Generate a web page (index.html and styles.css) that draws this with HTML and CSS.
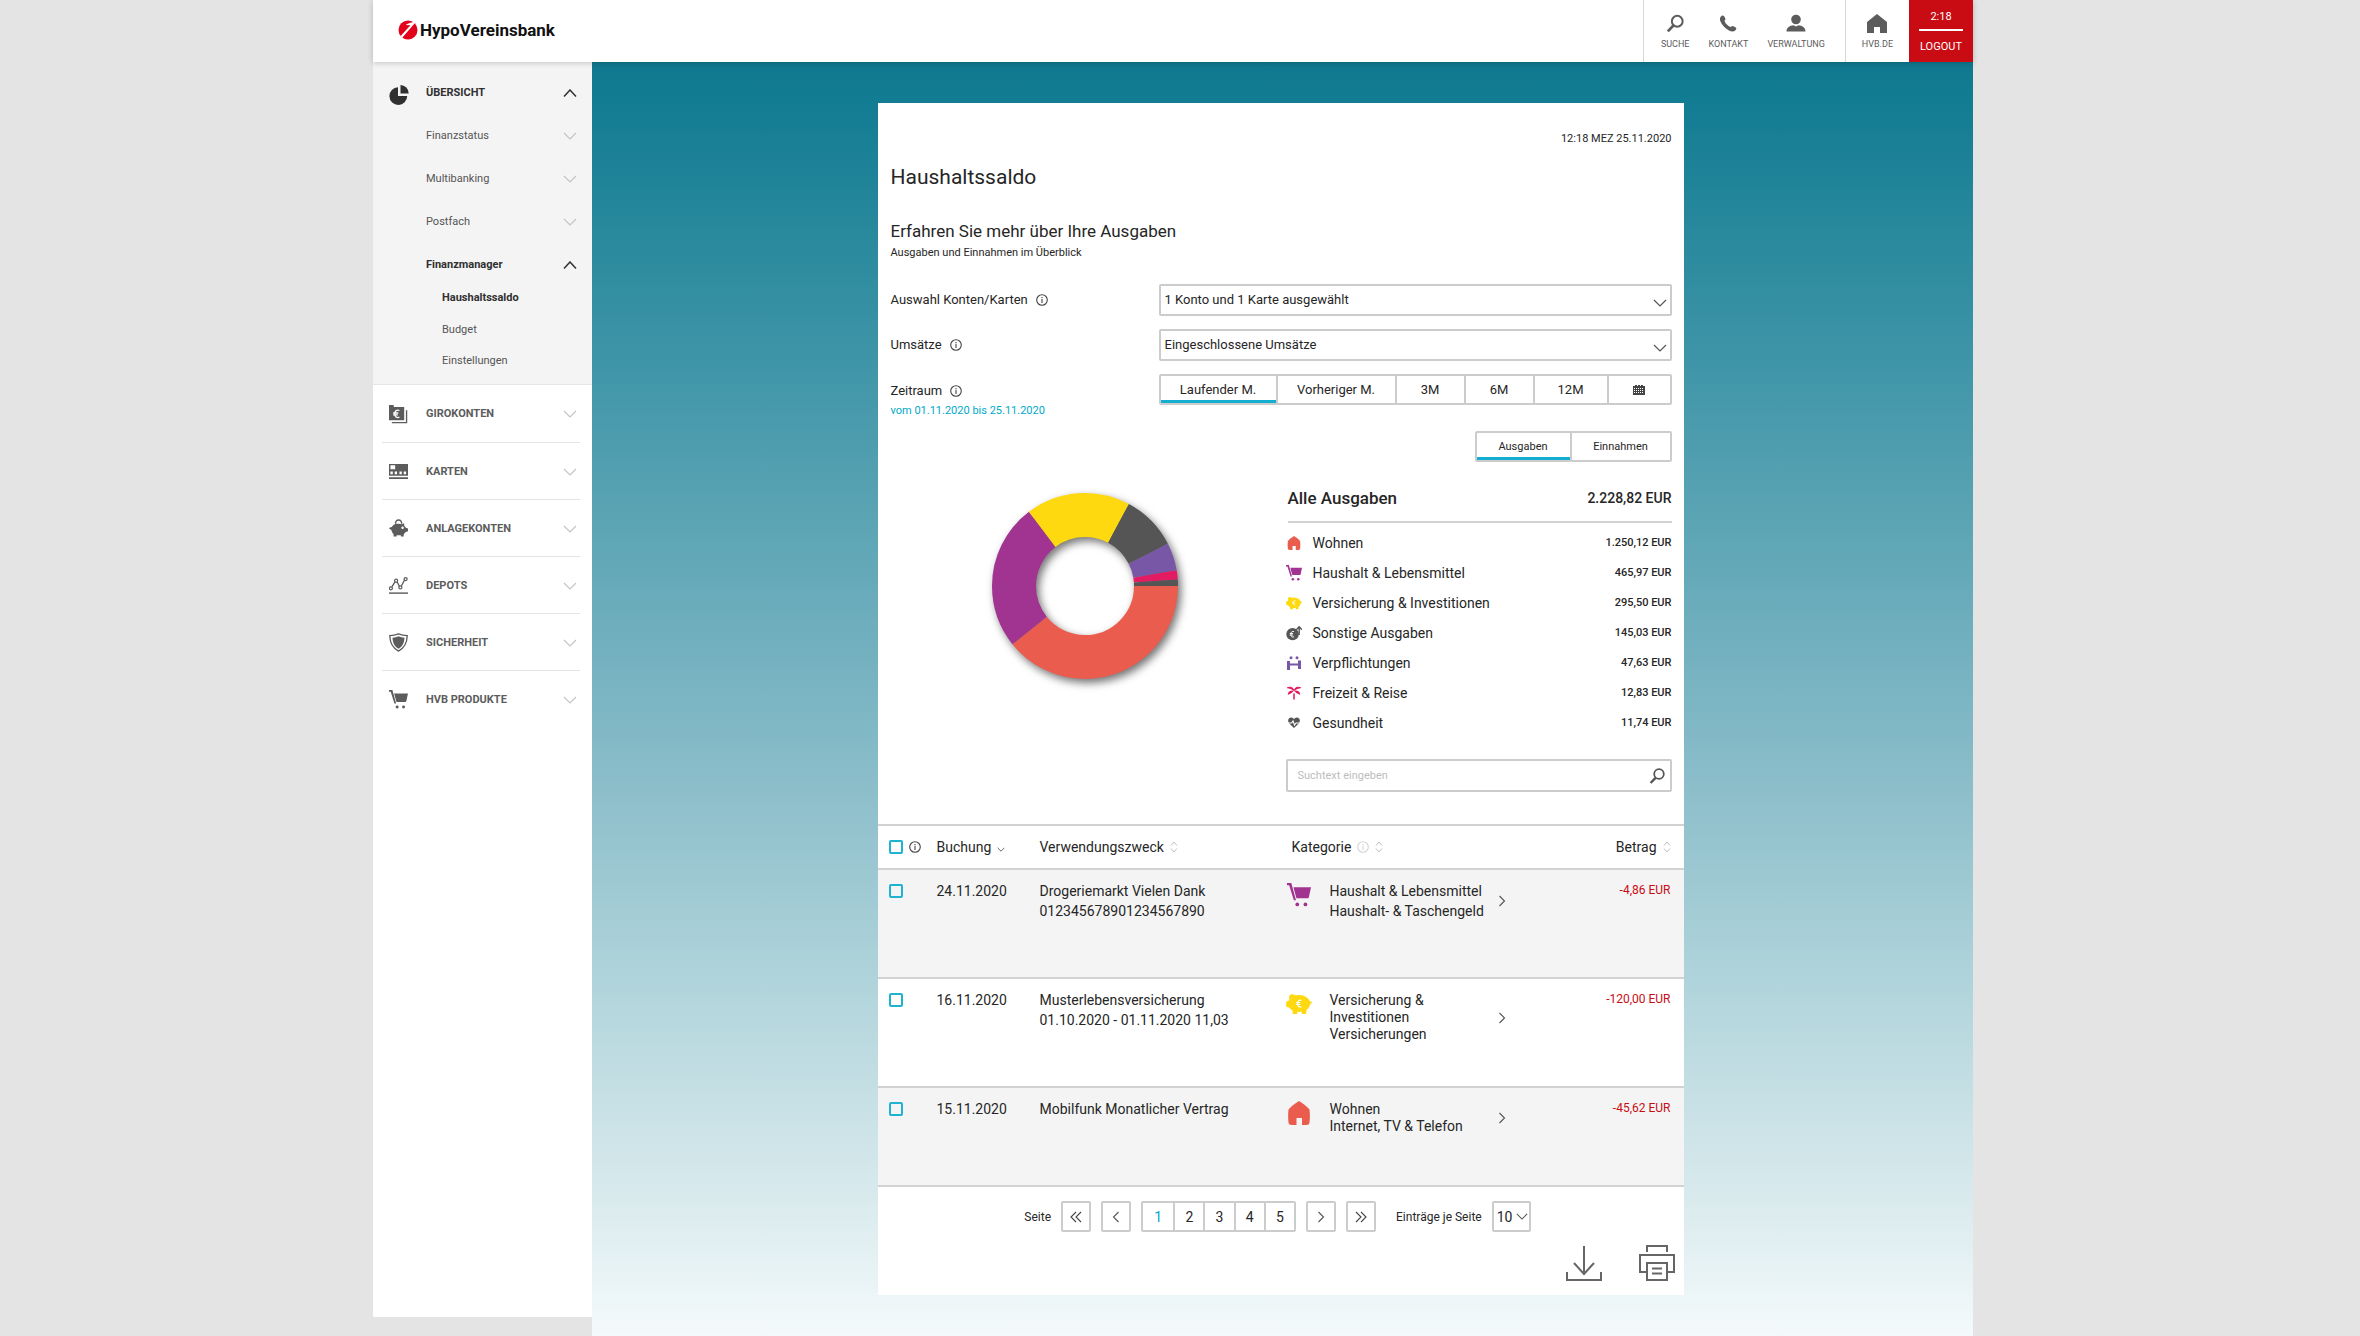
FILE: index.html
```html
<!DOCTYPE html>
<html lang="de">
<head>
<meta charset="utf-8">
<title>Haushaltssaldo – HypoVereinsbank</title>
<meta name="viewport" content="width=device-width, initial-scale=1">
<link rel="stylesheet" href="styles.css">
</head>
<body>
<svg class="sprite" aria-hidden="true">
  <symbol id="down" viewBox="0 0 14 8"><path d="M1 1l6 6 6-6" fill="none" stroke="currentColor" stroke-width="1.2"/></symbol>
  <symbol id="up" viewBox="0 0 14 8"><path d="M1 7.4L7 1l6 6.400" fill="none" stroke="currentColor" stroke-width="1.500"/></symbol>
  <symbol id="right" viewBox="0 0 8 12"><path d="M1.500 1l5 5-5 5" fill="none" stroke="currentColor" stroke-width="1.100"/></symbol>
  <symbol id="left" viewBox="0 0 8 12"><path d="M6.500 1l-5 5 5 5" fill="none" stroke="currentColor" stroke-width="1.100"/></symbol>
  <symbol id="first" viewBox="0 0 12 12"><path d="M6 1L1 6l5 5M11 1L6 6l5 5" fill="none" stroke="currentColor" stroke-width="1.100"/></symbol>
  <symbol id="last" viewBox="0 0 12 12"><path d="M1 1l5 5-5 5M6 1l5 5-5 5" fill="none" stroke="currentColor" stroke-width="1.100"/></symbol>
  <symbol id="sort" viewBox="0 0 8 12"><path d="M1 4.500L4 1l3 3.500M1 7.500L4 11l3-3.500" fill="none" stroke="currentColor"/></symbol>
  <symbol id="info" viewBox="0 0 12 12"><circle cx="6" cy="6" r="5.300" fill="none" stroke="currentColor" stroke-width="1.100"/><path d="M6 5v4M6 3v1.200" stroke="currentColor" stroke-width="1.100"/></symbol>
  <symbol id="search" viewBox="0 0 20 20"><circle cx="12.500" cy="7.500" r="6" fill="none" stroke="currentColor" stroke-width="2.200"/><path d="M8.500 12L2 18.800" stroke="currentColor" stroke-width="3"/></symbol>
  <symbol id="phone" viewBox="0 0 18 18"><path d="M1.500 2.500C2.500 1 4.200.500 5 1.500l1.400 2.800c.4.900-.9 1.700-.9 2.200 1 2.600 3.300 5 6 6 .6.200 1.300-1.300 2.300-.9l3 1.500c1 .6.500 2.200-.8 3.200-1.500 1.200-4 .9-6.500-.5C5.500 13.500 2.500 9.500 1.300 6.500c-.5-1.500-.5-2.800.2-4z" fill="currentColor"/></symbol>
  <symbol id="user" viewBox="0 0 20 18"><circle cx="10" cy="5" r="4.800" fill="currentColor"/><path d="M.5 17c0-4 3.500-6 7-6.200L10 12l2.500-1.200c3.500.2 7 2.200 7 6.200z" fill="currentColor"/></symbol>
  <symbol id="home" viewBox="0 0 20 19"><path d="M10 0l10 8v11h-7v-6H7v6H0V8z" fill="currentColor"/></symbol>
  <symbol id="pie" viewBox="0 0 20 20"><path d="M9 2.200V11h9.200A8.900 8.900 0 1 1 9 2.200z" fill="currentColor"/><path d="M11.500 0A8.400 8.400 0 0 1 19.700 8.500h-8.200z" fill="currentColor"/></symbol>
  <symbol id="giro" viewBox="0 0 20 20"><path d="M0 0h5v2h11v14H0z" fill="currentColor"/><path d="M18.500 5.500v13H3" fill="none" stroke="currentColor" stroke-width="1.400"/><path d="M11 5.800C8 4.500 6.200 6.300 6.200 9.300s1.800 4.800 4.800 3.500M4.300 8.400h5.500M4.300 10.400h5" fill="none" stroke="#fff" stroke-width="1.400"/></symbol>
  <symbol id="card" viewBox="0 0 20 18"><path d="M0 1h20v12.500H0zM0 15h20v2H0z" fill="currentColor"/><path d="M1.500 2.500h5v4h-5zM1.500 9h2.500v3H1.500zM6 9h2.500v3H6zM11 9h2.500v3H11zM15.500 9H18v3h-2.500z" fill="#fff"/></symbol>
  <symbol id="pig" viewBox="0 0 20 19"><path d="M7 4.500a3.200 3.200 0 1 1 6.200 0" fill="none" stroke="currentColor" stroke-width="1.500"/><path d="M3 8c1.500-3 4-3.500 7-3.500 1.500 0 2.500.2 3.500.6L16 4v2.600c.8.700 1.300 1.400 1.700 2.200L20 9.500v3l-2.500.8c-.6 1-1.200 1.600-2 2.100V18h-3v-1.500H8V18H4.800v-2.700C3.500 14 2.700 12.500 2.500 11L0 9.500l.8-1z" fill="currentColor"/><circle cx="14.300" cy="8.800" r="1.300" fill="#fff"/></symbol>
  <symbol id="depot" viewBox="0 0 20 18"><path d="M3 10.500L6.500 5M8.500 5L11 10M13 9.500l3.500-6.500" fill="none" stroke="currentColor" stroke-width="1.400"/><g fill="none" stroke="currentColor" stroke-width="1.300"><circle cx="2" cy="12" r="1.600"/><circle cx="7.500" cy="4" r="1.600"/><circle cx="12" cy="11" r="1.600"/><circle cx="17.500" cy="2.200" r="1.600"/></g><path d="M0 17h20" stroke="currentColor" stroke-width="1.500"/></symbol>
  <symbol id="shield" viewBox="0 0 20 20"><path d="M10 1c3 1.200 6 1.700 9.200 1.700C19 10 17 15.500 10 19 3 15.500 1 10 .8 2.700 4 2.700 7 2.200 10 1z" fill="none" stroke="currentColor" stroke-width="1.400"/><path d="M10 3.500c2 .8 4 1.200 6.300 1.400C16 10 14.500 14 10 16.500 5.500 14 4 10 3.700 4.900 6 4.700 8 4.300 10 3.500z" fill="currentColor"/></symbol>
  <symbol id="cart" viewBox="0 0 28 28"><path d="M0 0h5l5.500 20H8L2.500 2.500H0zM7.500 5H28l-2.500 11.500c-.2.800-.6 1.200-1.500 1.200H11z" fill="currentColor"/><circle cx="12" cy="25" r="2.200" fill="currentColor"/><circle cx="21.500" cy="25" r="2.200" fill="currentColor"/></symbol>
  <symbol id="wohnen" viewBox="0 0 22 24"><path d="M11 0c4 2.500 8 5.500 10.500 8.500.5 5 .5 9 0 13-.2 1.700-1 2.500-3.500 2.500h-4v-7H8.500v7H4c-2.500 0-3.300-.8-3.500-2.500-.5-4-.5-8 0-13C3 5.500 7 2.500 11 0z" fill="currentColor"/></symbol>
  <symbol id="ypig" viewBox="0 0 27 21"><g fill="currentColor"><ellipse cx="13.500" cy="10" rx="11.500" ry="8.800"/><path d="M3.500 5.500C2.500 2 4.500 0 7 .500L11 2zM3 7L.5 8C0 9.500 0 12 .5 13.500L4 14.500zM23 7c1.500 1 2.500 1 4 .8-.3 2-1.500 3-3 3.400zM6.500 15l.5 6h4.500l.5-3zM16 17.500l.7 3.500h4l1-6z"/></g><path d="M16 6.800c-2.200-1-4 .4-4 3.200s1.800 4.200 4 3.200M10.500 9.100h4.200M10.500 11h4.200" fill="none" stroke="#fff" stroke-width="1.200"/></symbol>
  <symbol id="bag" viewBox="0 0 17 16"><circle cx="7" cy="9.200" r="6.600" fill="currentColor"/><path d="M14 10V2M11 4.500L14 1.300l3 3.200" fill="none" stroke="currentColor" stroke-width="1.500"/><path d="M8.500 6.500C6.500 5.700 5.200 7 5.200 9.300s1.300 3.600 3.300 2.800M4 8.500h3.500M4 10.200h3.500" fill="none" stroke="#fff"/></symbol>
  <symbol id="deal" viewBox="0 0 14 14"><path d="M0 5h3v2.500h8V4.500h3V13h-3V9.500H3V14H0z" fill="currentColor"/><circle cx="4" cy="1.700" r="1.500" fill="currentColor"/><circle cx="10" cy="1.700" r="1.500" fill="currentColor"/></symbol>
  <symbol id="palm" viewBox="0 0 14 13"><path d="M6.500 3.300C5 .5 2.500.2.500 1.300c2 .2 4 1 6 2zM7.500 3.300c1.500-2.800 4-3.100 6-2-2 .2-4 1-6 2zM5.800 4.600C3.500 4.500 2 5.500 1.500 7.500c1.800-.6 3.200-1.500 4.300-2.900zM8.200 4.600c2.300-.1 3.800.9 4.300 2.900-1.800-.6-3.200-1.500-4.300-2.900z" fill="currentColor" stroke="currentColor" stroke-width="1.100"/><path d="M7 7v6" stroke="currentColor" stroke-width="1.500"/></symbol>
  <symbol id="heart" viewBox="0 0 12 11"><path d="M6 10.500L1 5.800C-.8 3 .500 0 3 0c1.500 0 2.500.7 3 1.800C6.500.7 7.500 0 9 0c2.500 0 3.800 3 2 5.800z" fill="currentColor"/><path d="M0 5.500h3.500L5 3.500l1.500 4L8 5.500h4" fill="none" stroke="#fff" stroke-width="1.100"/></symbol>
  <symbol id="calendar" viewBox="0 0 12 12"><path d="M0 2h12v9H0z" fill="currentColor"/><path d="M2 1h2v1H2zM5 1h2v1H5zM8 1h2v1H8z" fill="currentColor"/><path d="M1 4.500h10M1 6.500h10M1 8.500h10" stroke="#fff" stroke-dasharray="1 1"/></symbol>
  <symbol id="download" viewBox="0 0 36 36"><path d="M18 1v28M8 18l10 11 10-11M1 27v8h34v-8" fill="none" stroke="currentColor" stroke-width="2"/></symbol>
  <symbol id="print" viewBox="0 0 36 36"><path d="M8 7V1h20v6M8 27H1V10h34v17h-7M8 18h20v17H8zM13 23.500h10M13 28.500h10" fill="none" stroke="currentColor" stroke-width="2"/></symbol>
</svg>

<div class="shell">
  <header class="topbar">
    <a class="logo" href="#">
      <svg class="logo-mark" viewBox="0 0 20 20" aria-hidden="true"><circle cx="10" cy="10" r="9.500" fill="#e2001a"/><path d="M2.600 16L12.500 5.200 7.800 5c1.500-1.300 4.500-2.600 8-3L17 3 4.200 17.800z" fill="#fff"/></svg>
      <span>HypoVereinsbank</span>
    </a>
    <nav class="tools" aria-label="Service">
      <div class="tool-group">
        <a class="tool" href="#"><svg class="i17"><use href="#search"/></svg>SUCHE</a>
        <a class="tool" href="#"><svg class="i17"><use href="#phone"/></svg>KONTAKT</a>
        <a class="tool" href="#"><svg class="i18"><use href="#user"/></svg>VERWALTUNG</a>
      </div>
      <div class="tool-group tool-home">
        <a class="tool" href="#"><svg class="i19"><use href="#home"/></svg>HVB.DE</a>
      </div>
      <button class="logout" type="button"><span class="timer">2:18</span><span>LOGOUT</span></button>
    </nav>
  </header>

  <nav class="sidebar" aria-label="Hauptnavigation">
    <div class="open-section">
      <a class="nav-row nav-main" href="#"><svg class="nav-icon"><use href="#pie"/></svg><span>ÜBERSICHT</span><svg class="chev"><use href="#up"/></svg></a>
      <a class="nav-row nav-sub" href="#"><span>Finanzstatus</span><svg class="chev"><use href="#down"/></svg></a>
      <a class="nav-row nav-sub" href="#"><span>Multibanking</span><svg class="chev"><use href="#down"/></svg></a>
      <a class="nav-row nav-sub" href="#"><span>Postfach</span><svg class="chev"><use href="#down"/></svg></a>
      <a class="nav-row nav-sub active" href="#"><span>Finanzmanager</span><svg class="chev"><use href="#up"/></svg></a>
      <a class="nav-leaf active" href="#">Haushaltssaldo</a>
      <a class="nav-leaf" href="#">Budget</a>
      <a class="nav-leaf" href="#">Einstellungen</a>
    </div>
    <div class="sections">
      <a class="nav-row section" href="#"><svg class="nav-icon"><use href="#giro"/></svg><span>GIROKONTEN</span><svg class="chev"><use href="#down"/></svg></a>
      <a class="nav-row section" href="#"><svg class="nav-icon"><use href="#card"/></svg><span>KARTEN</span><svg class="chev"><use href="#down"/></svg></a>
      <a class="nav-row section" href="#"><svg class="nav-icon"><use href="#pig"/></svg><span>ANLAGEKONTEN</span><svg class="chev"><use href="#down"/></svg></a>
      <a class="nav-row section" href="#"><svg class="nav-icon"><use href="#depot"/></svg><span>DEPOTS</span><svg class="chev"><use href="#down"/></svg></a>
      <a class="nav-row section" href="#"><svg class="nav-icon"><use href="#shield"/></svg><span>SICHERHEIT</span><svg class="chev"><use href="#down"/></svg></a>
      <a class="nav-row section" href="#"><svg class="nav-icon"><use href="#cart"/></svg><span>HVB PRODUKTE</span><svg class="chev"><use href="#down"/></svg></a>
    </div>
  </nav>

  <main class="stage">
    <article class="card">
      <div class="intro">
        <p class="stamp">12:18 MEZ 25.11.2020</p>
        <h1>Haushaltssaldo</h1>
        <h2>Erfahren Sie mehr über Ihre Ausgaben</h2>
        <p class="lead">Ausgaben und Einnahmen im Überblick</p>
      </div>

      <form class="filters">
        <div class="field">
          <label for="konten">Auswahl Konten/Karten <svg class="i12"><use href="#info"/></svg></label>
          <div class="select"><select id="konten"><option>1 Konto und 1 Karte ausgewählt</option></select><svg class="chev"><use href="#down"/></svg></div>
        </div>
        <div class="field">
          <label for="umsaetze">Umsätze <svg class="i12"><use href="#info"/></svg></label>
          <div class="select"><select id="umsaetze"><option>Eingeschlossene Umsätze</option></select><svg class="chev"><use href="#down"/></svg></div>
        </div>
        <div class="field">
          <div class="period"><span class="period-name">Zeitraum <svg class="i12"><use href="#info"/></svg></span><span class="range">vom 01.11.2020 bis 25.11.2020</span></div>
          <div class="segments ranges">
            <button type="button" class="on">Laufender M.</button>
            <button type="button">Vorheriger M.</button>
            <button type="button">3M</button>
            <button type="button">6M</button>
            <button type="button">12M</button>
            <button type="button" aria-label="Kalender"><svg class="i12"><use href="#calendar"/></svg></button>
          </div>
        </div>
      </form>

      <div class="segments toggle">
        <button type="button" class="on">Ausgaben</button>
        <button type="button">Einnahmen</button>
      </div>

      <section class="overview">
        <svg class="donut" viewBox="0 0 210 210" role="img" aria-label="Verteilung der Ausgaben">
          <g fill="none" stroke-width="44" transform="translate(105 105)">
            <circle r="71" pathLength="360" stroke="#ea5c4d" stroke-dasharray="141.300 360"/>
            <circle r="71" pathLength="360" stroke="#a13391" stroke-dasharray="91.600 360" stroke-dashoffset="-141.300"/>
            <circle r="71" pathLength="360" stroke="#fed90f" stroke-dasharray="65.300 360" stroke-dashoffset="-232.900"/>
            <circle r="71" pathLength="360" stroke="#555" stroke-dasharray="34.800 360" stroke-dashoffset="-298.200"/>
            <circle r="71" pathLength="360" stroke="#7957a7" stroke-dasharray="17.300 360" stroke-dashoffset="-333"/>
            <circle r="71" pathLength="360" stroke="#e31b63" stroke-dasharray="5.600 360" stroke-dashoffset="-350.300"/>
            <circle r="71" pathLength="360" stroke="#555" stroke-dasharray="4.100 360" stroke-dashoffset="-355.900"/>
          </g>
        </svg>
        <div class="legend">
          <div class="legend-head"><h3>Alle Ausgaben</h3><strong>2.228,82 EUR</strong></div>
          <ul>
            <li><svg class="i14 c-red"><use href="#wohnen"/></svg><span>Wohnen</span><b>1.250,12 EUR</b></li>
            <li><svg class="i16 c-purple"><use href="#cart"/></svg><span>Haushalt &amp; Lebensmittel</span><b>465,97 EUR</b></li>
            <li><svg class="i16 c-yellow"><use href="#ypig"/></svg><span>Versicherung &amp; Investitionen</span><b>295,50 EUR</b></li>
            <li><svg class="i16 c-grey"><use href="#bag"/></svg><span>Sonstige Ausgaben</span><b>145,03 EUR</b></li>
            <li><svg class="i14 c-violet"><use href="#deal"/></svg><span>Verpflichtungen</span><b>47,63 EUR</b></li>
            <li><svg class="i14 c-pink"><use href="#palm"/></svg><span>Freizeit &amp; Reise</span><b>12,83 EUR</b></li>
            <li><svg class="i12 c-grey"><use href="#heart"/></svg><span>Gesundheit</span><b>11,74 EUR</b></li>
          </ul>
          <form class="search"><input type="search" aria-label="Suchtext" placeholder="Suchtext eingeben"><button type="button" aria-label="Suchen"><svg class="i16"><use href="#search"/></svg></button></form>
        </div>
      </section>

      <table class="bookings">
        <colgroup><col class="w-check"><col class="w-date"><col class="w-text"><col class="w-icon"><col class="w-cat"><col class="w-amount"></colgroup>
        <thead>
          <tr>
            <th><span class="cell"><input type="checkbox" aria-label="Alle auswählen"><svg class="i12"><use href="#info"/></svg></span></th>
            <th><span class="cell">Buchung <svg class="tiny"><use href="#down"/></svg></span></th>
            <th><span class="cell">Verwendungszweck <svg class="sort"><use href="#sort"/></svg></span></th>
            <th colspan="2" class="th-cat"><span class="cell">Kategorie <svg class="i12 faint"><use href="#info"/></svg><svg class="sort"><use href="#sort"/></svg></span></th>
            <th class="amount"><span class="cell end">Betrag <svg class="sort"><use href="#sort"/></svg></span></th>
          </tr>
        </thead>
        <tbody>
          <tr>
            <td><input type="checkbox" aria-label="Buchung 24.11.2020 auswählen"></td>
            <td>24.11.2020</td>
            <td>Drogeriemarkt Vielen Dank<br>012345678901234567890</td>
            <td><svg class="cat-icon c-purple"><use href="#cart"/></svg></td>
            <td><a class="category loose" href="#"><span>Haushalt &amp; Lebensmittel<br>Haushalt- &amp; Taschengeld</span><svg class="go"><use href="#right"/></svg></a></td>
            <td class="amount red">-4,86 EUR</td>
          </tr>
          <tr>
            <td><input type="checkbox" aria-label="Buchung 16.11.2020 auswählen"></td>
            <td>16.11.2020</td>
            <td>Musterlebensversicherung<br>01.10.2020 - 01.11.2020 11,03</td>
            <td><svg class="cat-icon c-yellow"><use href="#ypig"/></svg></td>
            <td><a class="category" href="#"><span>Versicherung &amp;<br>Investitionen<br>Versicherungen</span><svg class="go"><use href="#right"/></svg></a></td>
            <td class="amount red">-120,00 EUR</td>
          </tr>
          <tr class="last">
            <td><input type="checkbox" aria-label="Buchung 15.11.2020 auswählen"></td>
            <td>15.11.2020</td>
            <td>Mobilfunk Monatlicher Vertrag</td>
            <td><svg class="cat-icon c-red"><use href="#wohnen"/></svg></td>
            <td><a class="category" href="#"><span>Wohnen<br>Internet, TV &amp; Telefon</span><svg class="go"><use href="#right"/></svg></a></td>
            <td class="amount red">-45,62 EUR</td>
          </tr>
        </tbody>
      </table>

      <div class="pager">
        <span class="pager-name">Seite</span>
        <button type="button" class="page" aria-label="Erste Seite"><svg class="i12"><use href="#first"/></svg></button>
        <button type="button" class="page" aria-label="Vorherige Seite"><svg class="step"><use href="#left"/></svg></button>
        <div class="segments pages">
          <button type="button" class="current">1</button><button type="button">2</button><button type="button">3</button><button type="button">4</button><button type="button">5</button>
        </div>
        <button type="button" class="page" aria-label="Nächste Seite"><svg class="step"><use href="#right"/></svg></button>
        <button type="button" class="page" aria-label="Letzte Seite"><svg class="i12"><use href="#last"/></svg></button>
        <label class="per-page" for="per-page">Einträge je Seite</label>
        <div class="select small"><select id="per-page"><option>10</option></select><svg class="chev"><use href="#down"/></svg></div>
      </div>
      <div class="actions">
        <button type="button" aria-label="Herunterladen"><svg><use href="#download"/></svg></button>
        <button type="button" aria-label="Drucken"><svg><use href="#print"/></svg></button>
      </div>
    </article>
  </main>
</div>
</body>
</html>
```
FILE: styles.css
```css
* { box-sizing: border-box; }

body {
  margin: 0;
  min-height: 100vh;
  display: grid;
  grid-template-columns: minmax(0, 373fr) minmax(0, 1600px) minmax(0, 387fr);
  background: #e4e4e4;
  color: #262626;
  font: 13px/20px Roboto, "Noto Sans", sans-serif;
}

svg { display: block; flex: none; }
a { color: inherit; text-decoration: none; }
h1, h2, h3, p, ul { margin: 0; padding: 0; font-weight: 400; }
ul { list-style: none; }
button, input, select { font: inherit; color: inherit; margin: 0; }
button { padding: 0; border: 0; background: none; cursor: pointer; }

.sprite { position: absolute; width: 0; height: 0; }
.i12 { width: 12px; height: 12px; color: #444; }
.i14 { width: 14px; height: 14px; }
.i16 { width: 16px; height: 16px; }
.i17 { width: 18px; height: 18px; }
.i18 { width: 20px; height: 18px; }
.i19 { width: 20px; height: 19px; }
.c-red { color: #ea5c4d; }
.c-purple { color: #a13391; }
.c-yellow { color: #fed90f; }
.c-grey { color: #555; }
.c-violet { color: #7957a7; }
.c-pink { color: #e3175f; }

.shell {
  grid-column: 2;
  display: grid;
  grid-template-columns: 219px minmax(0, 1fr);
  grid-template-rows: 62px 1fr;
}

/* Top bar */
.topbar {
  grid-column: 1 / -1;
  display: flex;
  justify-content: space-between;
  background: #fff;
  box-shadow: 0 1px 6px rgba(0, 0, 0, .2);
  z-index: 1;
}
.logo {
  display: flex;
  align-items: center;
  gap: 2px;
  padding-left: 25px;
  height: 60px;
  font-size: 17px;
  font-weight: 700;
  color: #111;
}
.logo-mark { width: 20px; height: 20px; }
.tools { display: flex; }
.tool-group {
  display: flex;
  gap: 19px;
  padding: 14px 20px 0 17px;
  border-left: 1px solid #d8d8d8;
}
.tool-home { padding: 14px 16px 0; }
.tool {
  display: flex;
  flex-direction: column;
  align-items: center;
  gap: 3px;
  font-size: 9px;
  line-height: 16px;
  color: #5c5c5c;
}
.tool svg { height: 19px; }
.logout {
  display: flex;
  flex-direction: column;
  align-items: center;
  width: 64px;
  padding: 7px 10px;
  background: #c90c14;
  color: #fff;
  font-size: 11px;
  gap: 6px;
}
.timer { align-self: stretch; padding-bottom: 2px; border-bottom: 2px solid #fff; }

/* Sidebar */
.sidebar { background: #fff; margin-bottom: 19px; font-size: 11px; color: #555; }
.open-section { background: #f4f4f4; padding: 10px 0 8px; border-bottom: 1px solid #e6e6e6; }
.nav-row {
  display: grid;
  grid-template-columns: 20px 1fr 14px;
  column-gap: 17px;
  align-items: center;
  padding: 0 15px 0 16px;
}
.nav-icon { width: 20px; height: 20px; }
.section .nav-icon { width: 19px; height: 19px; }
.nav-row .chev { width: 14px; height: 8px; }
.nav-main { min-height: 42px; font-weight: 700; color: #303030; }
.nav-main .nav-icon { margin-top: 4px; }
.nav-sub { min-height: 43px; }
.nav-sub span { grid-column: 2; }
.nav-sub .chev, .section .chev { color: #c4c4c4; }
.active, .nav-sub.active .chev { color: #303030; font-weight: 700; }
.nav-leaf { display: block; padding: 0 0 0 69px; line-height: 31px; }
.nav-leaf.active { line-height: 24px; padding-bottom: 4px; }
.sections { padding: 0 12px 0 9px; }
.section { min-height: 57px; padding: 1px 3px 0 7px; font-weight: 700; color: #5c5c5c; }
.section + .section { border-top: 1px solid #e4e4e4; }

/* Content stage */
.stage {
  padding: 41px 24px 40px 20px;
  background: linear-gradient(#10798f, #127c92 3%, #4498aa 26%, #85bac7 54%, #b2d5dc 73%, #dbebee 90%, #f4fafb);
}
.card { max-width: 806px; margin: 0 auto; background: #fff; }
.intro, .filters { padding: 0 12px 0 13px; }
.intro { padding-top: 26px; }
.stamp { text-align: right; font-size: 11px; }
h1 { margin-top: 14px; font-size: 21px; line-height: 28px; }
h2 { margin-top: 28px; font-size: 17px; line-height: 24px; }
.lead { font-size: 11px; }

.filters { display: grid; gap: 13px; padding-top: 21px; }
.field { display: grid; grid-template-columns: 268px minmax(0, 1fr); align-items: center; }
.field label, .period-name { display: flex; align-items: center; gap: 8px; }
.select { display: grid; align-items: center; }
.select > * { grid-area: 1 / 1; }
.select select {
  width: 100%;
  height: 32px;
  padding: 0 6px 1px 4px;
  border: 2px solid #ccc;
  border-radius: 2px;
  background: #fff;
  appearance: none;
}
.select .chev { width: 14px; height: 8px; justify-self: end; margin: 6px 5px 0 0; color: #555; pointer-events: none; }
.period { display: grid; align-self: start; padding-top: 7px; height: 31px; }
.range { font-size: 11px; color: #00a9cb; }

.segments { display: grid; height: 31px; border: 2px solid #ccc; border-radius: 2px; }
.segments button { display: flex; align-items: center; justify-content: center; border-left: 2px solid #ccc; }
.segments button:first-child { border-left: 0; }
.segments .on { border-bottom: 3px solid #14aed0; padding-top: 3px; }
.ranges { grid-template-columns: 115fr 119fr 69fr 69fr 74fr 63fr; }
.toggle { grid-template-columns: 93fr 100fr; width: 197px; margin: 26px 12px 0 auto; font-size: 11px; }

/* Chart and legend */
.overview { display: grid; grid-template-columns: minmax(0, 1fr) 386px; padding: 19px 12px 32px; }
.donut {
  width: 210px;
  height: 210px;
  justify-self: center;
  margin: 0 6px 0 0;
  filter: drop-shadow(3px 4px 4px rgba(0, 0, 0, .55));
}
.legend-head {
  display: flex;
  justify-content: space-between;
  align-items: center;
  height: 42px;
  margin-left: 2px;
  padding-bottom: 6px;
  border-bottom: 2px solid #d2d2d2;
}
h3 { font-size: 17px; font-weight: 500; }
.legend-head strong { font-size: 14px; font-weight: 500; }
.legend ul { padding-top: 5px; font-size: 14px; }
.legend li { display: grid; grid-template-columns: 16px 1fr auto; column-gap: 11px; align-items: center; height: 30px; }
.legend li svg { justify-self: center; }
.legend li b { font-size: 11px; font-weight: 500; }
.search {
  display: flex;
  align-items: center;
  height: 33px;
  margin-top: 21px;
  border: 2px solid #ccc;
  border-radius: 2px;
}
.search input { flex: 1; min-width: 0; border: 0; padding: 0 10px; font-size: 11px; background: none; }
.search input::placeholder { color: #bdbdbd; }
.search button { padding-right: 5px; color: #555; }

/* Bookings */
.bookings { width: 100%; table-layout: fixed; border-collapse: collapse; border-top: 2px solid #d2d2d2; font-size: 14px; }
.w-check { width: 59px; }
.w-date { width: 103px; }
.w-text { width: 246px; }
.w-icon { width: 44px; }
.w-cat { width: 220px; }
th, td { padding: 0; text-align: left; vertical-align: top; font-weight: 400; }
thead tr { height: 44px; }
th { vertical-align: middle; }
.cell { display: flex; align-items: center; gap: 6px; }
.end { justify-content: flex-end; }
.th-cat { padding-left: 6px; }
tbody tr { height: 109px; border-top: 2px solid #d2d2d2; }
tbody tr.last { height: 99px; border-bottom: 2px solid #d2d2d2; }
tbody tr:nth-child(odd) { background: #f4f4f4; }
td { padding-top: 11px; }
th:first-child, td:first-child { padding-left: 11px; }
input[type="checkbox"] {
  display: block;
  appearance: none;
  width: 14px;
  height: 14px;
  border: 2px solid #1fb2d1;
  border-radius: 2px;
}
td input[type="checkbox"] { margin-top: 3px; }
.tiny { width: 8px; height: 5px; margin-top: 5px; }
.sort { width: 8px; height: 12px; color: #c0c0c0; }
.faint { color: #d4d4d4; }
.cat-icon { width: 26px; height: 24px; margin-top: 2px; }
.category { display: grid; grid-template-columns: 168px 8px; align-items: center; line-height: 17px; padding-top: 2px; }
.category.loose { line-height: 20px; padding-top: 0; }
.go { width: 8px; height: 12px; color: #555; }
th.amount, td.amount { padding-right: 13px; text-align: right; }
td.amount { padding-top: 10px; font-size: 12px; }
.red { color: #c90c14; }

/* Pager */
.pager { display: flex; align-items: center; justify-content: center; gap: 10px; padding: 14px 6px 0 0; font-size: 12px; }
.pager .page { display: grid; place-items: center; width: 30px; height: 31px; border: 2px solid #ccc; border-radius: 2px; color: #555; }
.step { width: 8px; height: 12px; }
.pages { grid-template-columns: repeat(5, 1fr); width: 155px; font-size: 14px; }
.pages .current { color: #00a9cb; }
.per-page { margin-left: 10px; }
.small { width: 39px; font-size: 14px; }
.small select { height: 31px; padding: 0 0 0 3px; }
.small .chev { width: 12px; height: 7px; margin: 0 3px 0 0; }
.actions { display: flex; justify-content: flex-end; gap: 37px; padding: 13px 9px 14px; color: #666; }
.actions svg { width: 36px; height: 36px; }
```
